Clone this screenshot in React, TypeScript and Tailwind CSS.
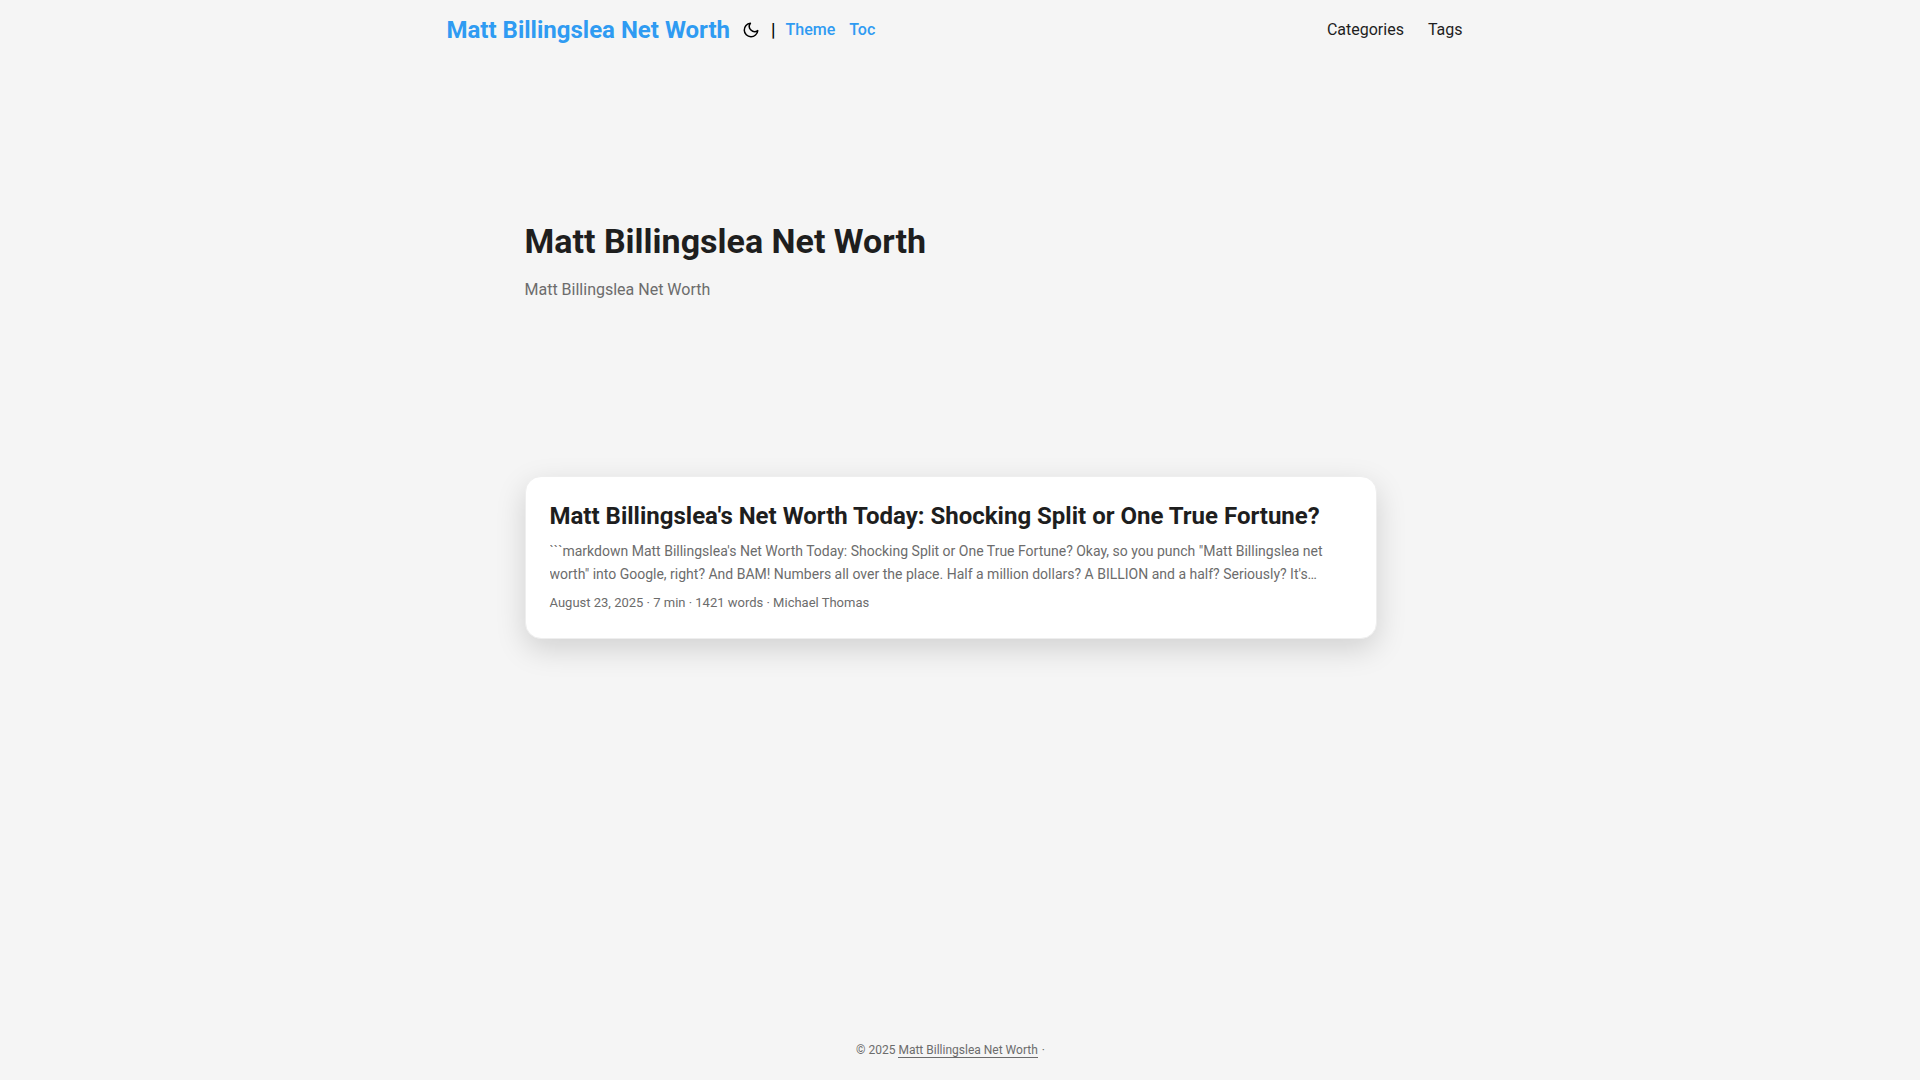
const link = "text-[#2f9bf2]";

function MoonIcon() {
  return (
    <svg
      width="18"
      height="18"
      viewBox="0 0 24 24"
      fill="none"
      stroke="currentColor"
      strokeWidth="2"
      strokeLinecap="round"
      strokeLinejoin="round"
      aria-hidden="true"
    >
      <path d="M21 12.79A9 9 0 1 1 11.21 3 7 7 0 0 0 21 12.79z" />
    </svg>
  );
}

export default function App() {
  return (
    <div className="flex min-h-screen flex-col bg-[#f5f5f5] font-[Roboto,sans-serif] text-base text-[#1e1e1e]">
      <header className="w-full pr-[19px]">
        <nav className="mx-auto flex h-15 w-full max-w-[1072px] items-center justify-between pr-6 pl-8">
          <div className="flex items-center">
            <a href="#" className="text-2xl font-bold text-[#2f9bf2]">Matt Billingslea Net Worth</a>
            <button type="button" aria-label="Toggle theme" className="ml-2 p-1 text-black">
              <MoonIcon />
            </button>
            <ul className="ml-[7px] flex items-center font-medium">
              <li className="text-lg text-black">|</li>
              <li className="ml-[10px]"><a href="#" className={link}>Theme</a></li>
              <li className="ml-[14px]"><a href="#" className={link}>Toc</a></li>
            </ul>
          </div>
          <ul className="flex gap-6">
            <li><a href="#">Categories</a></li>
            <li><a href="#">Tags</a></li>
          </ul>
        </nav>
      </header>
      <main className="w-full flex-1 pr-[19px]">
        <div className="mx-auto w-full max-w-[900px] px-6 pt-10">
          <article className="flex h-[320px] flex-col justify-center">
            <h1 className="text-[34px] leading-[44px] font-bold">Matt Billingslea Net Worth</h1>
            <p className="mt-[15px] text-[#6c6c6c]">Matt Billingslea Net Worth</p>
          </article>
          <article className="mt-14 rounded-2xl border border-[#eeeeee] bg-white p-6 shadow-[0_10px_30px_rgba(0,0,0,0.15)]">
            <h2 className="text-2xl leading-[31px] font-bold">Matt Billingslea's Net Worth Today: Shocking Split or One True Fortune?</h2>
            <p className="mt-2 mb-[6px] line-clamp-2 text-sm leading-[23px] text-[#6c6c6c]">
              ```markdown Matt Billingslea's Net Worth Today: Shocking Split or One True Fortune? Okay, so you punch "Matt Billingslea net worth" into Google, right? And BAM! Numbers all over the place. Half a million dollars? A BILLION and a half? Seriously? It's…
            </p>
            <p className="text-[13px] leading-[22px] text-[#6c6c6c]">August 23, 2025 · 7 min · 1421 words · Michael Thomas</p>
          </article>
        </div>
      </main>
      <footer className="flex h-15 items-center justify-center pr-[19px] text-xs text-[#6c6c6c]">
        <span>© 2025 <a href="#" className="mr-px border-b border-[#6c6c6c]">Matt Billingslea Net Worth</a> ·</span>
      </footer>
    </div>
  );
}
